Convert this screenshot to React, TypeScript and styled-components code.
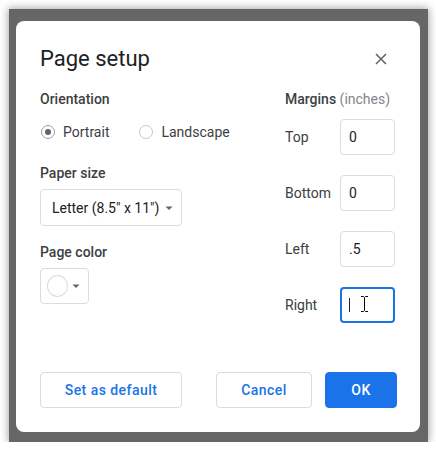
import React from 'react';
import styled, { createGlobalStyle } from 'styled-components';

const GlobalStyle = createGlobalStyle`
  html, body {
    margin: 0;
    background: #ffffff;
    font-family: Roboto, "Liberation Sans", Arial, sans-serif;
  }
  * { box-sizing: border-box; }
`;

const Backdrop = styled.div`
  margin: 9px 0 0 9px;
  width: 419px;
  height: 433px;
  padding: 12px 8px 10px 7px;
  background: #666666;
  box-shadow: 0 0 8px 1px rgba(0, 0, 0, 0.35);
`;

const Dialog = styled.div`
  width: 404px;
  height: 411px;
  background: #ffffff;
  border-radius: 8px;
  padding: 24px 23px 24px 24px;
  display: flex;
  flex-direction: column;
`;

const Header = styled.div`
  display: flex;
  align-items: center;
  justify-content: space-between;
`;

const Title = styled.h1`
  margin: 0;
  font-size: 22px;
  line-height: 28px;
  font-weight: 400;
  color: #202124;
`;

const CloseButton = styled.button`
  width: 20px;
  height: 20px;
  margin-right: 6px;
  padding: 0;
  border: 0;
  background: transparent;
  color: #5f6368;
  display: flex;
  align-items: center;
  justify-content: center;
`;

const Body = styled.div`
  display: flex;
  margin-top: 16px;
`;

const LeftColumn = styled.div`
  width: 245px;
  display: flex;
  flex-direction: column;
`;

const RightColumn = styled.div`
  flex: 1;
  display: flex;
  flex-direction: column;
`;

const SectionLabel = styled.div<{ $gap?: number }>`
  margin-top: ${({ $gap }) => $gap ?? 0}px;
  font-size: 14px;
  line-height: 20px;
  font-weight: 500;
  color: #3c4043;
`;

const Hint = styled.span`
  font-weight: 400;
  color: #80868b;
`;

const RadioGroup = styled.div`
  display: flex;
  align-items: center;
  margin-top: 13px;
  height: 20px;
`;

const RadioOption = styled.label`
  display: flex;
  align-items: center;
  margin-left: 1px;
  margin-right: 29px;
  font-size: 14px;
  color: #3c4043;
`;

const RadioCircle = styled.span<{ $checked?: boolean }>`
  width: 14px;
  height: 14px;
  border-radius: 50%;
  border: 1px solid ${({ $checked }) => ($checked ? '#9aa0a6' : '#c6c9cc')};
  margin-right: 8px;
  display: flex;
  align-items: center;
  justify-content: center;
  &::after {
    content: '';
    width: 6px;
    height: 6px;
    border-radius: 50%;
    background: ${({ $checked }) => ($checked ? '#5f6368' : 'transparent')};
  }
`;

const Dropdown = styled.div<{ $width: number; $height: number }>`
  margin-top: 6px;
  width: ${({ $width }) => $width}px;
  height: ${({ $height }) => $height}px;
  border: 1px solid #dadce0;
  border-radius: 4px;
  display: flex;
  align-items: center;
  font-size: 14px;
  color: #202124;
`;

const DropdownText = styled.span`
  padding-left: 11px;
  flex: 1;
  white-space: nowrap;
`;

const Arrow = styled.svg`
  width: 14px;
  height: 14px;
  margin-right: 5px;
  color: #5f6368;
  flex-shrink: 0;
`;

const Swatch = styled.span`
  width: 22px;
  height: 22px;
  margin-left: 6px;
  margin-right: 1px;
  border-radius: 50%;
  border: 1px solid #dadce0;
  background: #ffffff;
`;

const MarginRows = styled.div`
  display: flex;
  flex-direction: column;
  gap: 20px;
  margin-top: 10px;
`;

const MarginRow = styled.div`
  display: flex;
  align-items: center;
  height: 36px;
`;

const MarginLabel = styled.span`
  width: 55px;
  font-size: 14px;
  color: #3c4043;
`;

const MarginInput = styled.div<{ $focused?: boolean }>`
  position: relative;
  width: 55px;
  height: 36px;
  border: ${({ $focused }) => ($focused ? '2px solid #1a73e8' : '1px solid #dadce0')};
  border-radius: 4px;
  padding-left: ${({ $focused }) => ($focused ? 7 : 8)}px;
  display: flex;
  align-items: center;
  font-size: 14px;
  color: #202124;
`;

const Caret = styled.span`
  width: 1px;
  height: 14px;
  background: #202124;
`;

const IBeam = styled.svg`
  position: absolute;
  left: 18px;
  top: 6px;
  width: 9px;
  height: 18px;
`;

const Footer = styled.div`
  margin-top: auto;
  display: flex;
  align-items: center;
  gap: 13px;
`;

const Button = styled.button<{ $primary?: boolean; $width: number }>`
  width: ${({ $width }) => $width}px;
  height: 36px;
  padding: 0;
  border-radius: 4px;
  border: 1px solid ${({ $primary }) => ($primary ? '#1a73e8' : '#dadce0')};
  background: ${({ $primary }) => ($primary ? '#1a73e8' : '#ffffff')};
  color: ${({ $primary }) => ($primary ? '#ffffff' : '#1a73e8')};
  font-family: Roboto, "Liberation Sans", Arial, sans-serif;
  font-size: 14px;
  font-weight: 500;
  letter-spacing: 0.45px;
`;

const Spacer = styled.div`
  flex: 1;
`;

const ArrowIcon = () => (
  <Arrow viewBox="0 0 14 14">
    <path d="M3.5 5.5h7L7 9z" fill="currentColor" />
  </Arrow>
);

const margins = [
  { label: 'Top', value: '0' },
  { label: 'Bottom', value: '0' },
  { label: 'Left', value: '.5' },
];

export default function App() {
  return (
    <>
      <GlobalStyle />
      <Backdrop>
        <Dialog>
          <Header>
            <Title>Page setup</Title>
            <CloseButton aria-label="Close">
              <svg width="20" height="20" viewBox="0 0 24 24">
                <path d="M6 6l12 12M18 6L6 18" stroke="currentColor" strokeWidth="1.8" fill="none" />
              </svg>
            </CloseButton>
          </Header>
          <Body>
            <LeftColumn>
              <SectionLabel>Orientation</SectionLabel>
              <RadioGroup>
                <RadioOption>
                  <RadioCircle $checked />
                  Portrait
                </RadioOption>
                <RadioOption>
                  <RadioCircle />
                  Landscape
                </RadioOption>
              </RadioGroup>
              <SectionLabel $gap={21}>Paper size</SectionLabel>
              <Dropdown $width={142} $height={37}>
                <DropdownText>Letter (8.5" x 11")</DropdownText>
                <ArrowIcon />
              </Dropdown>
              <SectionLabel $gap={16}>Page color</SectionLabel>
              <Dropdown $width={49} $height={36}>
                <Swatch />
                <ArrowIcon />
              </Dropdown>
            </LeftColumn>
            <RightColumn>
              <SectionLabel>
                Margins <Hint>(inches)</Hint>
              </SectionLabel>
              <MarginRows>
                {margins.map((m) => (
                  <MarginRow key={m.label}>
                    <MarginLabel>{m.label}</MarginLabel>
                    <MarginInput>{m.value}</MarginInput>
                  </MarginRow>
                ))}
                <MarginRow>
                  <MarginLabel>Right</MarginLabel>
                  <MarginInput $focused>
                    <Caret />
                    <IBeam viewBox="0 0 9 18">
                      <path d="M1 1.5h2.5l1 1 1-1H8M4.5 2.5v13M1 16.5h2.5l1-1 1 1H8" stroke="#ffffff" strokeWidth="2.4" fill="none" />
                      <path d="M1 1.5h2.5l1 1 1-1H8M4.5 2.5v13M1 16.5h2.5l1-1 1 1H8" stroke="#000000" strokeWidth="1" fill="none" />
                    </IBeam>
                  </MarginInput>
                </MarginRow>
              </MarginRows>
            </RightColumn>
          </Body>
          <Footer>
            <Button $width={142}>Set as default</Button>
            <Spacer />
            <Button $width={96}>Cancel</Button>
            <Button $width={72} $primary>OK</Button>
          </Footer>
        </Dialog>
      </Backdrop>
    </>
  );
}
